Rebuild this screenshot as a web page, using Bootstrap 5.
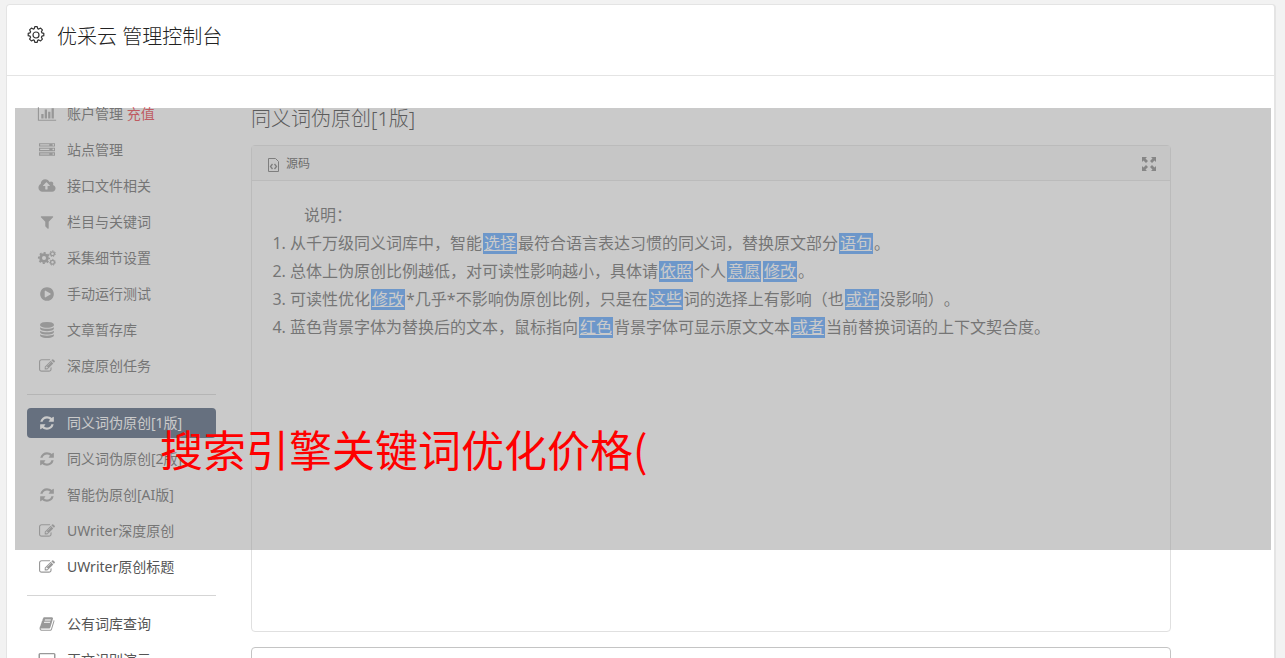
<!DOCTYPE html>
<html lang="zh-CN">
<head>
<meta charset="utf-8">
<meta name="viewport" content="width=device-width, initial-scale=1">
<title>优采云 管理控制台</title>
<link href="https://cdn.jsdelivr.net/npm/bootstrap@5.3.0/dist/css/bootstrap.min.css" rel="stylesheet">
<style>
  body { font-family: "Noto Sans", "Noto Sans CJK SC", sans-serif; font-size: 14px; background: #f2f2f2; color: #555; text-spacing-trim: space-all; }
  .page { height: 100vh; padding: 4px 9px 0 6px; }
  .console { min-height: 100%; border: 1px solid #e4e4e4; border-right-width: 2px; border-bottom: 0; border-radius: 4px 4px 0 0; }
  .console-head { height: 71px; padding: 17px 20px 0; border-bottom: 1px solid #e4e4e4; color: #222; }
  .console-head h1, .main-col h2 { font-size: 20px; line-height: 30px; font-weight: 300; }
  .console-body { padding: 23px 103px 0 20px; gap: 35px; }
  .side { flex: 0 0 189px; gap: 6px; }
  .side .nav-link { display: flex; align-items: center; gap: 10px; height: 30px; padding: 0 10px; border-radius: 4px; color: #555; line-height: 20px; white-space: nowrap; }
  .side .nav-link.active { background: #364a68; color: #fff; }
  .side hr { margin: 7px 0; border-top: 1px solid #d5d5d5; opacity: 1; }
  .recharge { color: #e8202c; }
  .ico { flex: 0 0 20px; width: 20px; height: 16px; fill: #999; stroke: none; }
  .active .ico { fill: #fff; }
  .main-col { min-width: 0; padding-top: 5px; }
  .main-col h2 { color: #222; margin: 0 0 11px; }
  .editor { border: 1px solid #e0e0e0; border-radius: 4px; }
  .editor-bar { height: 35px; padding: 2px 14px 0; background: #f7f7f7; border-bottom: 1px solid #e0e0e0; }
  .tool { border: 0; background: none; padding: 0; color: #444; font-size: 12px; line-height: 20px; }
  .editor-text { min-height: 450px; padding: 20px 20px; font-size: 16px; line-height: 28px; color: #555; }
  .editor-text p { text-indent: 32px; }
  .editor-text ol { padding-left: 18px; }
  .swap { background: #49f; color: #fff; text-decoration: underline; padding: 0 1px; margin: 0 1px; display: inline-block; line-height: 21px; }
  .next-box { height: 100px; margin-top: 15px; border: 1px solid #c4c4c4; border-radius: 4px; }
  .veil { left: 8px; right: 3px; top: 32px; height: 442px; background: rgba(149,149,149,.5); pointer-events: none; }
  .veil span { display: block; padding: 308px 0 0 145px; font-family: "Noto Sans CJK SC", sans-serif; font-size: 43px; line-height: 64px; color: #f00; white-space: nowrap; }
</style>
</head>
<body>
<svg class="d-none" aria-hidden="true">
  <symbol id="chart" viewBox="0 0 2048 1792"><path d="M640 896v512h-256v-512h256zm384-512v1024h-256v-1024h256zm1024 1152v128h-2048v-1536h128v1408h1920zm-640-896v768h-256v-768h256zm384-384v1152h-256v-1152h256z"/></symbol>
  <symbol id="server" viewBox="0 0 1792 1792"><path d="M128 1408h1024v-128h-1024v128zm0-512h1024v-128h-1024v128zm1568 448q0-40-28-68t-68-28-68 28-28 68 28 68 68 28 68-28 28-68zm-1568-960h1024v-128h-1024v128zm1568 448q0-40-28-68t-68-28-68 28-28 68 28 68 68 28 68-28 28-68zm0-512q0-40-28-68t-68-28-68 28-28 68 28 68 68 28 68-28 28-68zm96 832v384h-1792v-384h1792zm0-512v384h-1792v-384h1792zm0-512v384h-1792v-384h1792z"/></symbol>
  <symbol id="cloud" viewBox="-64 0 2048 1792"><path d="M1280 864q0-14-9-23l-352-352q-9-9-23-9t-23 9l-351 351q-10 12-10 24 0 14 9 23t23 9h224v352q0 13 9.500 22.500t22.500 9.500h192q13 0 22.500-9.500t9.500-22.500v-352h224q13 0 22.500-9.500t9.500-22.500zm640 288q0 159-112.500 271.500t-271.500 112.500h-1088q-185 0-316.500-131.500t-131.500-316.500q0-130 70-240t188-165q-2-30-2-43 0-212 150-362t362-150q156 0 285.500 87t188.500 231q71-62 166-62 106 0 181 75t75 181q0 76-41 138 130 31 213.500 135.500t83.500 238.500z"/></symbol>
  <symbol id="filter" viewBox="0 0 1792 1792"><path d="M1595 295q17 41-14 70l-493 493v742q0 42-39 59-13 5-25 5-27 0-45-19l-256-256q-19-19-19-45v-486l-493-493q-31-29-14-70 17-39 59-39h1280q42 0 59 39z"/></symbol>
  <symbol id="cogs" viewBox="0 0 18 16"><g fill="none" stroke="#999"><circle cx="6" cy="8" r="3.400" stroke-width="2.800"/><circle cx="6" cy="8" r="5.200" stroke-width="1.800" stroke-dasharray="2.040 2.040" stroke-dashoffset="1"/><circle cx="14.500" cy="3.700" r="1.900" stroke-width="1.300"/><circle cx="14.500" cy="3.700" r="2.900" stroke-width="1" stroke-dasharray="1.300 1.300"/><circle cx="14.500" cy="12.300" r="1.900" stroke-width="1.300"/><circle cx="14.500" cy="12.300" r="2.900" stroke-width="1" stroke-dasharray="1.300 1.300"/></g></symbol>
  <symbol id="play" viewBox="0 0 1792 1792"><path d="M896 128q209 0 385.500 103t279.500 279.500 103 385.500-103 385.500-279.500 279.500-385.500 103-385.500-103-279.500-279.500-103-385.500 103-385.500 279.500-279.500 385.500-103zm384 823q32-18 32-55t-32-55l-544-320q-31-19-64-1-32 19-32 56v640q0 37 32 56 16 8 32 8 17 0 32-9z"/></symbol>
  <symbol id="database" viewBox="0 0 1792 1792"><path d="M896 768q237 0 443-43t325-127v170q0 69-103 128t-280 93.500-385 34.500-385-34.500-280-93.500-103-128v-170q119 84 325 127t443 43zm0 768q237 0 443-43t325-127v170q0 69-103 128t-280 93.500-385 34.500-385-34.500-280-93.500-103-128v-170q119 84 325 127t443 43zm0-384q237 0 443-43t325-127v170q0 69-103 128t-280 93.500-385 34.500-385-34.500-280-93.500-103-128v-170q119 84 325 127t443 43zm0-1152q208 0 385 34.500t280 93.500 103 128v128q0 69-103 128t-280 93.500-385 34.500-385-34.500-280-93.500-103-128v-128q0-69 103-128t280-93.500 385-34.500z"/></symbol>
  <symbol id="edit" viewBox="0 0 1792 1792"><path d="M888 1184l116-116-152-152-116 116v56h96v96h56zm440-720q-16-16-33 1l-350 350q-17 17-1 33t33-1l350-350q17-17 1-33zm80 594v190q0 119-84.500 203.500t-203.500 84.500h-832q-119 0-203.500-84.500t-84.500-203.500v-832q0-119 84.500-203.500t203.500-84.500h832q63 0 117 25 15 7 18 23 3 17-9 29l-49 49q-14 14-32 8-23-6-45-6h-832q-66 0-113 47t-47 113v832q0 66 47 113t113 47h832q66 0 113-47t47-113v-126q0-13 9-22l64-64q15-15 35-7t20 29zm-96-738l288 288-672 672h-288v-288zm444 132l-92 92-288-288 92-92q28-28 68-28t68 28l152 152q28 28 28 68t-28 68z"/></symbol>
  <symbol id="refresh" viewBox="0 0 1792 1792"><path d="M1639 1056q0 5-1 7-64 268-268 434.500t-478 166.500q-146 0-282.500-55t-243.500-157l-129 129q-19 19-45 19t-45-19-19-45v-448q0-26 19-45t45-19h448q26 0 45 19t19 45-19 45l-137 137q71 66 161 102t187 36q134 0 250-65t186-179q11-17 53-117 8-23 30-23h192q13 0 22.500 9.500t9.500 22.500zm25-800v448q0 26-19 45t-45 19h-448q-26 0-45-19t-19-45 19-45l138-138q-148-137-349-137-134 0-250 65t-186 179q-11 17-53 117-8 23-30 23h-199q-13 0-22.500-9.500t-9.500-22.500v-7q65-268 270-434.500t480-166.500q146 0 284 55.500t245 156.500l130-129q19-19 45-19t45 19 19 45z"/></symbol>
  <symbol id="book" viewBox="0 0 1792 1792"><path d="M1703 478q40 57 18 129l-275 906q-19 64-76.500 107.500t-122.500 43.500h-923q-77 0-148.500-53.500t-99.500-131.500q-24-67-2-127 0-4 3-27t4-37q1-8-3-21.500t-3-19.500q2-11 8-21t16.500-23.500 16.500-23.500q23-38 45-91.500t30-91.500q3-10 .5-30t-.5-28q3-11 17-28t17-23q21-36 42-92t25-90q1-9-2.500-32t.5-28q4-13 22-30.500t22-22.500q19-26 42.500-84.500t27.500-96.500q1-8-3-25.500t-2-26.500q2-8 9-18t18-23 17-21q8-12 16.500-30.500t15-35 16-36 19.500-32 26.500-23.500 36-11.500 47.500 5.500l-1 3q38-9 51-9h761q74 0 114 56t18 130l-274 906q-36 119-71.500 153.500t-128.500 34.500h-869q-27 0-38 15-11 16-1 43 24 70 144 70h923q29 0 56-15.500t35-41.500l300-987q7-22 5-57 38 15 59 43zm-1064 2q-4 13 2 22.500t20 9.500h608q13 0 25.500-9.500t16.500-22.500l21-64q4-13-2-22.500t-20-9.500h-608q-13 0-25.500 9.500t-16.500 22.500zm-83 256q-4 13 2 22.500t20 9.500h608q13 0 25.500-9.500t16.500-22.500l21-64q4-13-2-22.500t-20-9.500h-608q-13 0-25.500 9.500t-16.500 22.500z"/></symbol>
  <symbol id="screen" viewBox="0 0 18 16"><path d="M2 1h14a1.500 1.500 0 0 1 1.500 1.500v9A1.500 1.500 0 0 1 16 13h-5v1.500h1.500V16h-7v-1.500H7V13H2a1.500 1.500 0 0 1-1.500-1.500v-9A1.500 1.500 0 0 1 2 1zm0 1.300v8h14v-8z"/></symbol>
</svg>

<div class="page overflow-hidden">
  <div class="console bg-white">
    <header class="console-head d-flex align-items-start">
      <svg width="18" height="18" viewBox="0 0 18 18" class="flex-shrink-0 mt-1 me-2" fill="none" stroke="#333" stroke-width="1.200" aria-hidden="true"><circle cx="9" cy="9" r="3"/><path d="M7.300 2.600 7.800.7h2.400l.5 1.900 1.100.5 1.800-1 1.800 1.800-1 1.800.5 1.100 1.900.5v2.400l-1.900.5-.5 1.100 1 1.800-1.800 1.800-1.800-1-1.100.5-.5 1.900H7.800l-.5-1.900-1.100-.5-1.800 1-1.800-1.800 1-1.800-.5-1.100-1.900-.5V7.300l1.900-.5.5-1.100-1-1.800 1.800-1.800 1.800 1z" stroke-linejoin="round"/></svg>
      <h1 class="m-0 ps-1">优采云 管理控制台</h1>
    </header>

    <div class="position-relative">
      <div class="console-body d-flex">
        <nav class="side nav flex-column flex-nowrap">
          <a class="nav-link" href="#"><svg class="ico"><use href="#chart"/></svg><span>账户管理 <span class="recharge">充值</span></span></a>
          <a class="nav-link" href="#"><svg class="ico"><use href="#server"/></svg>站点管理</a>
          <a class="nav-link" href="#"><svg class="ico"><use href="#cloud"/></svg>接口文件相关</a>
          <a class="nav-link" href="#"><svg class="ico"><use href="#filter"/></svg>栏目与关键词</a>
          <a class="nav-link" href="#"><svg class="ico"><use href="#cogs"/></svg>采集细节设置</a>
          <a class="nav-link" href="#"><svg class="ico"><use href="#play"/></svg>手动运行测试</a>
          <a class="nav-link" href="#"><svg class="ico"><use href="#database"/></svg>文章暂存库</a>
          <a class="nav-link" href="#"><svg class="ico"><use href="#edit"/></svg>深度原创任务</a>
          <hr>
          <a class="nav-link active" href="#" aria-current="page"><svg class="ico"><use href="#refresh"/></svg>同义词伪原创[1版]</a>
          <a class="nav-link" href="#"><svg class="ico"><use href="#refresh"/></svg>同义词伪原创[2版]</a>
          <a class="nav-link" href="#"><svg class="ico"><use href="#refresh"/></svg>智能伪原创[AI版]</a>
          <a class="nav-link" href="#"><svg class="ico"><use href="#edit"/></svg>UWriter深度原创</a>
          <a class="nav-link" href="#"><svg class="ico"><use href="#edit"/></svg>UWriter原创标题</a>
          <hr>
          <a class="nav-link" href="#"><svg class="ico"><use href="#book"/></svg>公有词库查询</a>
          <a class="nav-link" href="#"><svg class="ico"><use href="#screen"/></svg>正文识别演示</a>
        </nav>

        <main class="main-col flex-grow-1">
          <h2>同义词伪原创[1版]</h2>
          <section class="editor">
            <div class="editor-bar d-flex align-items-center justify-content-between">
              <button type="button" class="tool d-flex align-items-center gap-1">
                <svg width="16" height="16" viewBox="0 0 16 16" fill="none" stroke="#666" aria-hidden="true"><path d="M2.500 2.500h7l3 3v10h-10z"/><path d="M6.500 8 4.500 10.500l2 2.500M8.500 8l2 2.500-2 2.500" stroke-width="1.300"/></svg>
                源码
              </button>
              <button type="button" class="tool" aria-label="全屏">
                <svg class="d-block" width="14" height="14" viewBox="0 0 14 14" fill="#777" aria-hidden="true"><path id="arr" d="M0 0h5L3.500 1.500 6 4 4 6 1.500 3.500 0 5z"/><use href="#arr" transform="rotate(90 7 7)"/><use href="#arr" transform="rotate(180 7 7)"/><use href="#arr" transform="rotate(270 7 7)"/></svg>
              </button>
            </div>
            <div class="editor-text">
              <p class="m-0">说明：</p>
              <ol class="m-0">
                <li>从千万级同义词库中，智能<span class="swap">选择</span>最符合语言表达习惯的同义词，替换原文部分<span class="swap">语句</span>。</li>
                <li>总体上伪原创比例越低，对可读性影响越小，具体请<span class="swap">依照</span>个人<span class="swap">意愿</span><span class="swap">修改</span>。</li>
                <li>可读性优化<span class="swap">修改</span>*几乎*不影响伪原创比例，只是在<span class="swap">这些</span>词的选择上有影响（也<span class="swap">或许</span>没影响）。</li>
                <li>蓝色背景字体为替换后的文本，鼠标指向<span class="swap">红色</span>背景字体可显示原文文本<span class="swap">或者</span>当前替换词语的上下文契合度。</li>
              </ol>
            </div>
          </section>
          <div class="next-box"></div>
        </main>
      </div>
      <div class="veil position-absolute"><span>搜索引擎关键词优化价格(</span></div>
    </div>
  </div>
</div>
<script src="https://cdn.jsdelivr.net/npm/bootstrap@5.3.0/dist/js/bootstrap.bundle.min.js"></script>
</body>
</html>
